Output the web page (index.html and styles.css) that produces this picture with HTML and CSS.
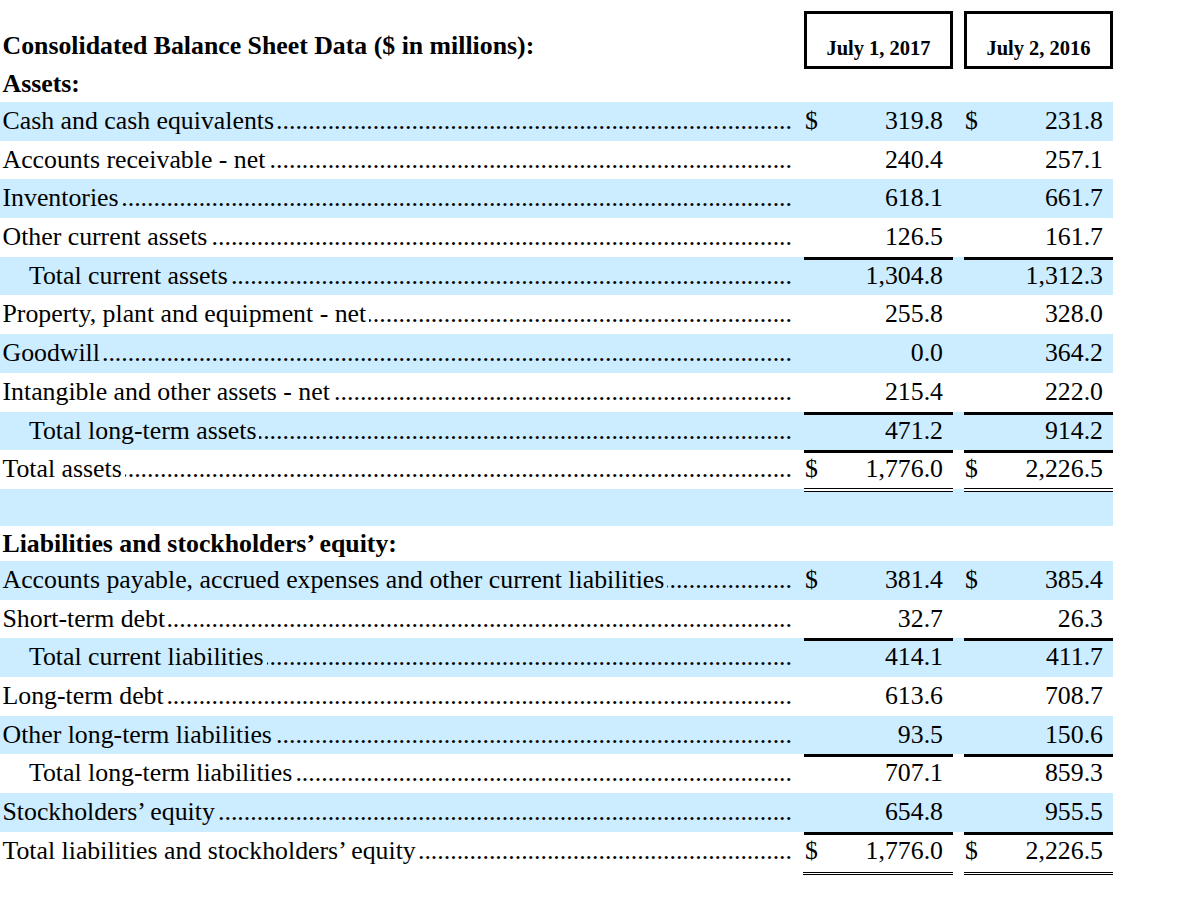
FILE: index.html
```html
<!DOCTYPE html>
<html lang="en">
<head>
<meta charset="utf-8">
<title>Consolidated Balance Sheet Data</title>
<link rel="stylesheet" href="styles.css">
</head>
<body>
<div class="sheet">
  <div class="head">
    <div class="head-labels">
      <div class="title">Consolidated Balance Sheet Data ($ in millions):</div>
      <div class="section">Assets:</div>
    </div>
    <div class="date">July 1, 2017</div>
    <div class="date">July 2, 2016</div>
  </div>

  <div class="row blue">
    <div class="label"><span>Cash and cash equivalents</span><span class="dots"></span></div>
    <div class="val"><span>$</span><span class="num">319.8</span></div>
    <div class="val"><span>$</span><span class="num">231.8</span></div>
  </div>
  <div class="row">
    <div class="label"><span>Accounts receivable - net</span><span class="dots"></span></div>
    <div class="val"><span class="num">240.4</span></div>
    <div class="val"><span class="num">257.1</span></div>
  </div>
  <div class="row blue">
    <div class="label"><span>Inventories</span><span class="dots"></span></div>
    <div class="val"><span class="num">618.1</span></div>
    <div class="val"><span class="num">661.7</span></div>
  </div>
  <div class="row">
    <div class="label"><span>Other current assets</span><span class="dots"></span></div>
    <div class="val"><span class="num">126.5</span></div>
    <div class="val"><span class="num">161.7</span></div>
  </div>
  <div class="row blue rule">
    <div class="label indent"><span>Total current assets</span><span class="dots"></span></div>
    <div class="val"><span class="num">1,304.8</span></div>
    <div class="val"><span class="num">1,312.3</span></div>
  </div>
  <div class="row">
    <div class="label"><span>Property, plant and equipment - net</span><span class="dots"></span></div>
    <div class="val"><span class="num">255.8</span></div>
    <div class="val"><span class="num">328.0</span></div>
  </div>
  <div class="row blue">
    <div class="label"><span>Goodwill</span><span class="dots"></span></div>
    <div class="val"><span class="num">0.0</span></div>
    <div class="val"><span class="num">364.2</span></div>
  </div>
  <div class="row">
    <div class="label"><span>Intangible and other assets - net</span><span class="dots"></span></div>
    <div class="val"><span class="num">215.4</span></div>
    <div class="val"><span class="num">222.0</span></div>
  </div>
  <div class="row blue rule">
    <div class="label indent"><span>Total long-term assets</span><span class="dots"></span></div>
    <div class="val"><span class="num">471.2</span></div>
    <div class="val"><span class="num">914.2</span></div>
  </div>
  <div class="row sum">
    <div class="label"><span>Total assets</span><span class="dots"></span></div>
    <div class="val"><span>$</span><span class="num">1,776.0</span></div>
    <div class="val"><span>$</span><span class="num">2,226.5</span></div>
  </div>
  <div class="row blue blank">
    <div class="label"></div>
    <div class="val"></div>
    <div class="val"></div>
  </div>
  <div class="subhead">Liabilities and stockholders’ equity:</div>

  <div class="row blue">
    <div class="label"><span>Accounts payable, accrued expenses and other current liabilities</span><span class="dots"></span></div>
    <div class="val"><span>$</span><span class="num">381.4</span></div>
    <div class="val"><span>$</span><span class="num">385.4</span></div>
  </div>
  <div class="row">
    <div class="label"><span>Short-term debt</span><span class="dots"></span></div>
    <div class="val"><span class="num">32.7</span></div>
    <div class="val"><span class="num">26.3</span></div>
  </div>
  <div class="row blue rule">
    <div class="label indent"><span>Total current liabilities</span><span class="dots"></span></div>
    <div class="val"><span class="num">414.1</span></div>
    <div class="val"><span class="num">411.7</span></div>
  </div>
  <div class="row">
    <div class="label"><span>Long-term debt</span><span class="dots"></span></div>
    <div class="val"><span class="num">613.6</span></div>
    <div class="val"><span class="num">708.7</span></div>
  </div>
  <div class="row blue">
    <div class="label"><span>Other long-term liabilities</span><span class="dots"></span></div>
    <div class="val"><span class="num">93.5</span></div>
    <div class="val"><span class="num">150.6</span></div>
  </div>
  <div class="row rule">
    <div class="label indent"><span>Total long-term liabilities</span><span class="dots"></span></div>
    <div class="val"><span class="num">707.1</span></div>
    <div class="val"><span class="num">859.3</span></div>
  </div>
  <div class="row blue">
    <div class="label"><span>Stockholders’ equity</span><span class="dots"></span></div>
    <div class="val"><span class="num">654.8</span></div>
    <div class="val"><span class="num">955.5</span></div>
  </div>
  <div class="row rule">
    <div class="label"><span>Total liabilities and stockholders’ equity</span><span class="dots"></span></div>
    <div class="val"><span>$</span><span class="num">1,776.0</span></div>
    <div class="val"><span>$</span><span class="num">2,226.5</span></div>
  </div>
  <div class="double-rule">
    <div></div>
    <div class="dbl"></div>
    <div class="dbl"></div>
  </div>
</div>
</body>
</html>
```

FILE: styles.css
```css
html, body {
  margin: 0;
  padding: 0;
  background: #ffffff;
}

body {
  font-family: "Liberation Serif", "Times New Roman", serif;
  font-size: 25.8px;
  color: #000000;
}

.sheet {
  width: 1113px;
}

.head,
.row,
.double-rule {
  display: grid;
  column-gap: 0;
}

.head > :last-child,
.row > :last-child,
.double-rule > :last-child {
  margin-left: 11px;
}

.head,
.row {
  grid-template-columns: 804px 149px 160px;
}

.double-rule {
  grid-template-columns: 803px 150px 160px;
}

.head {
  height: 102px;
}

.head-labels {
  padding-top: 27px;
  padding-left: 2.5px;
  font-weight: bold;
  white-space: nowrap;
}

.title {
  height: 38px;
  line-height: 38px;
}

.section {
  height: 37px;
  line-height: 37px;
}

.date {
  margin-top: 11px;
  height: 58px;
  box-sizing: border-box;
  border: 3px solid #000000;
  font-size: 20.5px;
  font-weight: bold;
  display: flex;
  align-items: flex-end;
  justify-content: center;
  padding-bottom: 6px;
  white-space: nowrap;
}

.row {
  height: 38.7px;
  line-height: 38.7px;
}

.row.blue {
  background: #ccecff;
}

.row.blank {
  height: 37px;
}

.label {
  display: flex;
  min-width: 0;
  padding: 0 12px 0 2.5px;
  white-space: nowrap;
}

.label.indent {
  padding-left: 29px;
}

.dots {
  flex: 1;
  min-width: 0;
  overflow: hidden;
  direction: rtl;
  margin-left: 3px;
}

.dots::before {
  content: "..................................................................................................................................................";
}

.val {
  display: flex;
  padding: 0 10px 0 1px;
  white-space: nowrap;
}

.val .num {
  margin-left: auto;
}

.rule .val {
  box-shadow: inset 0 3px 0 #000000;
}

.sum .val {
  box-shadow: inset 0 3px 0 #000000, inset 0 -1px 0 #000000;
}

.blank .val {
  box-shadow: inset 0 2px 0 #ffffff, inset 0 3px 0 #000000;
}

.subhead {
  height: 35px;
  line-height: 35px;
  padding-left: 2.5px;
  font-weight: bold;
  white-space: nowrap;
}

.double-rule {
  margin-top: 1.4px;
}

.dbl {
  height: 1px;
  border-top: 1px solid #000000;
  border-bottom: 1px solid #000000;
}
```
